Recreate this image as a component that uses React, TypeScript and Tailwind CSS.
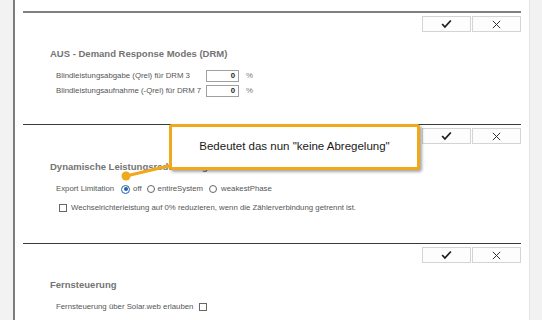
const CheckIcon = () => (
  <svg width="11" height="9" viewBox="0 0 11 9">
    <path d="M0.5 4.6 L3.9 8.2 L10.5 1.1 L9.2 0 L3.9 5.8 L1.8 3.4 Z" fill="#1e1e1e" />
  </svg>
);

const XIcon = () => (
  <svg width="9" height="9" viewBox="0 0 9 9">
    <path d="M0.8 0.8 L8.2 8.2 M8.2 0.8 L0.8 8.2" stroke="#333" strokeWidth="1" />
  </svg>
);

function ActionButtons() {
  return (
    <div className="mt-[3px] flex justify-end gap-px">
      <button className="flex h-[16px] w-[49px] items-center justify-center border border-[#d4d4d4] bg-[#fdfdfd]">
        <CheckIcon />
      </button>
      <button className="flex h-[16px] w-[49px] items-center justify-center border border-[#d4d4d4] bg-[#fdfdfd]">
        <XIcon />
      </button>
    </div>
  );
}

function Heading({ children, mt }: { children: React.ReactNode; mt: string }) {
  return (
    <div className={`${mt} h-[12px] pl-[27px] text-[9.5px] leading-[12px] font-bold text-[#747474]`}>
      {children}
    </div>
  );
}

function Radio({ checked }: { checked?: boolean }) {
  return checked ? (
    <span className="flex h-[9px] w-[9px] shrink-0 items-center justify-center rounded-full border border-[#1f5fae] bg-white">
      <span className="block h-[4px] w-[4px] rounded-full bg-[#1f5fae]" />
    </span>
  ) : (
    <span className="block h-[8px] w-[8px] shrink-0 rounded-full border border-[#666] bg-white" />
  );
}

function NumberField({ label }: { label: string }) {
  return (
    <div className="flex h-[12px] items-center pl-[33px]">
      <span className="w-[150px] text-[7.8px] text-[#555]">{label}</span>
      <span className="flex h-[12px] w-[33px] items-center justify-end border border-[#a0a0a0] pr-[3px] text-[7.8px] font-bold text-[#222]">
        0
      </span>
      <span className="ml-[7px] text-[7.8px] text-[#777]">%</span>
    </div>
  );
}

export default function App() {
  return (
    <div className="relative flex h-[320px] w-[542px] overflow-hidden bg-[#f2f2f2] font-['Liberation_Sans',Arial,sans-serif]">
      <div className="ml-[13px] h-full w-[517px] border-l-2 border-r border-l-[#7c7c7c] border-r-[#e4e4e4] bg-white px-[8px]">
        {/* AUS - DRM */}
        <div className="pt-[11px]">
          <div className="border-t-2 border-[#808080]" />
          <ActionButtons />
          <Heading mt="mt-[16px]">AUS - Demand Response Modes (DRM)</Heading>
          <div className="mt-[10px]">
            <NumberField label="Blindleistungsabgabe (Qrel) für DRM 3" />
          </div>
          <div className="mt-[3px]">
            <NumberField label="Blindleistungsaufnahme (-Qrel) für DRM 7" />
          </div>
        </div>

        {/* Dynamische Leistungsreduzierung */}
        <div className="mt-[27px]">
          <div className="border-t border-[#3a3a3a]" />
          <ActionButtons />
          <Heading mt="mt-[17px]">Dynamische Leistungsreduzierung</Heading>
          <div className="mt-[10px] flex h-[12px] items-center pl-[33px] text-[7.8px] text-[#555]">
            <span>Export Limitation</span>
            <span className="ml-[7px]"><Radio checked /></span>
            <span className="ml-[3px]">off</span>
            <span className="ml-[5px]"><Radio /></span>
            <span className="ml-[3px]">entireSystem</span>
            <span className="ml-[6px]"><Radio /></span>
            <span className="ml-[4px]">weakestPhase</span>
          </div>
          <div className="mt-[7px] flex h-[12px] items-center pl-[36px] text-[7.8px] text-[#555]">
            <span className="block h-[8px] w-[8px] border border-[#666] bg-white" />
            <span className="ml-[4px]">Wechselrichterleistung auf 0% reduzieren, wenn die Zählerverbindung getrennt ist.</span>
          </div>
        </div>

        {/* Fernsteuerung */}
        <div className="mt-[29px]">
          <div className="border-t border-[#3a3a3a]" />
          <ActionButtons />
          <Heading mt="mt-[16px]">Fernsteuerung</Heading>
          <div className="mt-[10px] flex h-[12px] items-center pl-[33px] text-[7.8px] text-[#555]">
            <span>Fernsteuerung über Solar.web erlauben</span>
            <span className="ml-[6px] block h-[8px] w-[8px] border border-[#666] bg-white" />
          </div>
        </div>
      </div>

      {/* callout */}
      <svg className="absolute left-0 top-0" width="542" height="320">
        <line x1="126" y1="176" x2="173" y2="165" stroke="#f0a81c" strokeWidth="3" />
        <circle cx="126" cy="176" r="4.5" fill="#f0a81c" />
      </svg>
      <div className="absolute left-[169px] top-[124px] flex h-[46px] w-[251px] items-center justify-center rounded-[3px] border-[3px] border-[#f0a81c] bg-white text-[11.5px] text-[#1a1a1a] shadow-[2px_2px_3px_rgba(0,0,0,0.35)]">
        Bedeutet das nun "keine Abregelung"
      </div>
    </div>
  );
}
